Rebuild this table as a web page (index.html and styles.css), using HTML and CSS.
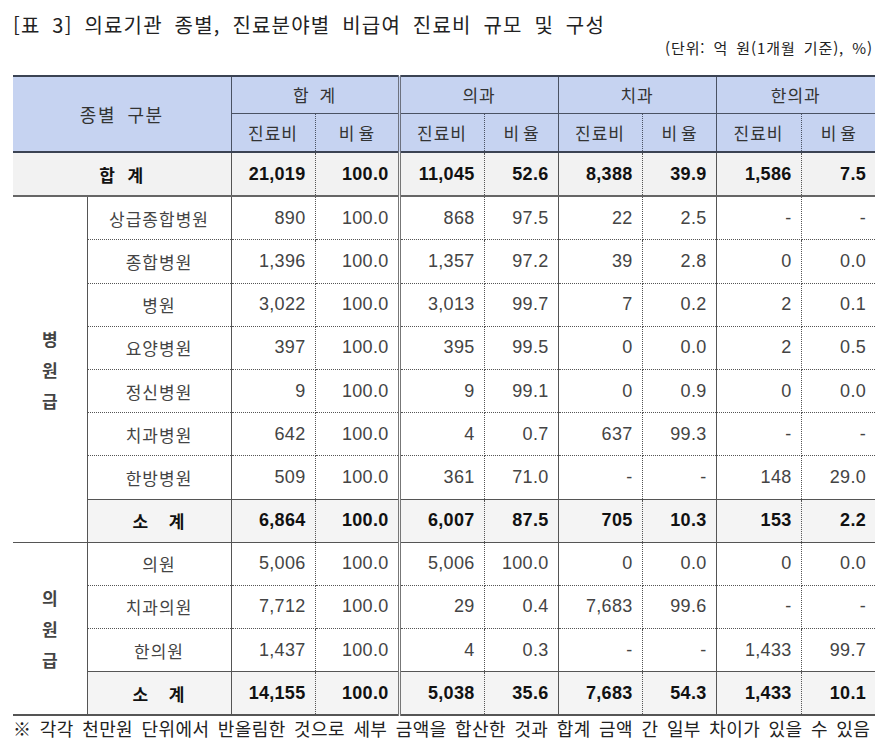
FILE: index.html
```html
<!DOCTYPE html>
<html lang="ko">
<head>
<meta charset="utf-8">
<title>표 3</title>
<link rel="stylesheet" href="styles.css">
</head>
<body>
<div class="page">
  <h1 class="title">[표 3] 의료기관 종별, 진료분야별 비급여 진료비 규모 및 구성</h1>
  <div class="unit">(단위: 억 원(1개월 기준), %)</div>
  <table class="tbl">
    <colgroup>
      <col class="w-grp"><col class="w-sub">
      <col class="w84"><col class="w84">
      <col class="w85"><col class="w74">
      <col class="w84"><col class="w74">
      <col class="w85"><col class="w74">
    </colgroup>
    <thead>
      <tr class="h1">
        <th colspan="2" rowspan="2" class="hlabel">종별 구분</th>
        <th colspan="2" class="g">합 계</th>
        <th colspan="2" class="g dbl">의과</th>
        <th colspan="2" class="g">치과</th>
        <th colspan="2" class="g">한의과</th>
      </tr>
      <tr class="h2">
        <th class="a">진료비</th><th class="b">비율</th>
        <th class="a dbl">진료비</th><th class="b">비율</th>
        <th class="a">진료비</th><th class="b">비율</th>
        <th class="a">진료비</th><th class="b">비율</th>
      </tr>
    </thead>
    <tbody>
      <tr class="total">
        <td colspan="2" class="lbl">합 계</td>
        <td class="a">21,019</td><td class="b">100.0</td>
        <td class="a dbl">11,045</td><td class="b">52.6</td>
        <td class="a">8,388</td><td class="b">39.9</td>
        <td class="a">1,586</td><td class="b">7.5</td>
      </tr>
      <tr class="dot">
        <td rowspan="8" class="grp">병<br>원<br>급</td>
        <td class="sub">상급종합병원</td>
        <td class="a">890</td><td class="b">100.0</td>
        <td class="a dbl">868</td><td class="b">97.5</td>
        <td class="a">22</td><td class="b">2.5</td>
        <td class="a">-</td><td class="b">-</td>
      </tr>
      <tr class="dot">
        <td class="sub">종합병원</td>
        <td class="a">1,396</td><td class="b">100.0</td>
        <td class="a dbl">1,357</td><td class="b">97.2</td>
        <td class="a">39</td><td class="b">2.8</td>
        <td class="a">0</td><td class="b">0.0</td>
      </tr>
      <tr class="dot">
        <td class="sub">병원</td>
        <td class="a">3,022</td><td class="b">100.0</td>
        <td class="a dbl">3,013</td><td class="b">99.7</td>
        <td class="a">7</td><td class="b">0.2</td>
        <td class="a">2</td><td class="b">0.1</td>
      </tr>
      <tr class="dot">
        <td class="sub">요양병원</td>
        <td class="a">397</td><td class="b">100.0</td>
        <td class="a dbl">395</td><td class="b">99.5</td>
        <td class="a">0</td><td class="b">0.0</td>
        <td class="a">2</td><td class="b">0.5</td>
      </tr>
      <tr class="dot">
        <td class="sub">정신병원</td>
        <td class="a">9</td><td class="b">100.0</td>
        <td class="a dbl">9</td><td class="b">99.1</td>
        <td class="a">0</td><td class="b">0.9</td>
        <td class="a">0</td><td class="b">0.0</td>
      </tr>
      <tr class="dot">
        <td class="sub">치과병원</td>
        <td class="a">642</td><td class="b">100.0</td>
        <td class="a dbl">4</td><td class="b">0.7</td>
        <td class="a">637</td><td class="b">99.3</td>
        <td class="a">-</td><td class="b">-</td>
      </tr>
      <tr class="dot">
        <td class="sub">한방병원</td>
        <td class="a">509</td><td class="b">100.0</td>
        <td class="a dbl">361</td><td class="b">71.0</td>
        <td class="a">-</td><td class="b">-</td>
        <td class="a">148</td><td class="b">29.0</td>
      </tr>
      <tr class="subtotal">
        <td class="sub st">소 계</td>
        <td class="a">6,864</td><td class="b">100.0</td>
        <td class="a dbl">6,007</td><td class="b">87.5</td>
        <td class="a">705</td><td class="b">10.3</td>
        <td class="a">153</td><td class="b">2.2</td>
      </tr>
      <tr class="dot">
        <td rowspan="4" class="grp">의<br>원<br>급</td>
        <td class="sub">의원</td>
        <td class="a">5,006</td><td class="b">100.0</td>
        <td class="a dbl">5,006</td><td class="b">100.0</td>
        <td class="a">0</td><td class="b">0.0</td>
        <td class="a">0</td><td class="b">0.0</td>
      </tr>
      <tr class="dot">
        <td class="sub">치과의원</td>
        <td class="a">7,712</td><td class="b">100.0</td>
        <td class="a dbl">29</td><td class="b">0.4</td>
        <td class="a">7,683</td><td class="b">99.6</td>
        <td class="a">-</td><td class="b">-</td>
      </tr>
      <tr class="dot">
        <td class="sub">한의원</td>
        <td class="a">1,437</td><td class="b">100.0</td>
        <td class="a dbl">4</td><td class="b">0.3</td>
        <td class="a">-</td><td class="b">-</td>
        <td class="a">1,433</td><td class="b">99.7</td>
      </tr>
      <tr class="subtotal last">
        <td class="sub st">소 계</td>
        <td class="a">14,155</td><td class="b">100.0</td>
        <td class="a dbl">5,038</td><td class="b">35.6</td>
        <td class="a">7,683</td><td class="b">54.3</td>
        <td class="a">1,433</td><td class="b">10.1</td>
      </tr>
    </tbody>
  </table>
  <p class="note">※ 각각 천만원 단위에서 반올림한 것으로 세부 금액을 합산한 것과 합계 금액 간 일부 차이가 있을 수 있음</p>
</div>
</body>
</html>
```
FILE: styles.css
```css
html, body {
  margin: 0;
  padding: 0;
  background: #ffffff;
}
body {
  font-family: "Noto Sans CJK KR", "Liberation Sans", sans-serif;
  color: #222;
}
.page {
  width: 862px;
  padding: 13px 0 0 13px;
}
.title {
  margin: 0;
  font-size: 20px;
  font-weight: 400;
  line-height: 24px;
  letter-spacing: 1.2px;
  word-spacing: 5px;
  color: #222;
  white-space: nowrap;
}
.unit {
  margin-top: 2px;
  text-align: right;
  padding-right: 2px;
  font-size: 15px;
  line-height: 18px;
  letter-spacing: 0.9px;
  word-spacing: 3px;
  color: #222;
}
.tbl {
  margin-top: 18px;
  width: 862px;
  table-layout: fixed;
  border-collapse: collapse;
  border-top: 2px solid #3b4353;
  border-bottom: 2px solid #555;
}
.w-grp { width: 74px; }
.w-sub { width: 144px; }
.w84 { width: 84px; }
.w85 { width: 85px; }
.w74 { width: 74px; }

.tbl th {
  background: #c6d3f1;
  font-weight: 400;
  font-size: 17px;
  letter-spacing: 1px;
  color: #333;
  padding: 0;
  text-align: center;
}
.tbl th.b { letter-spacing: 4px; text-indent: 4px; }
.tbl .h1 .g:first-child { word-spacing: 4px; }
.h1 { height: 37px; }
.h2 { height: 39px; }
.h1 .g { border-bottom: 1px solid #4a5263; border-left: 1px solid #4a5263; word-spacing: 4px; }
.h2 th { border-bottom: 2px solid #3b4353; }
.hlabel {
  border-bottom: 2px solid #3b4353;
  border-right: 1px solid #4a5263;
  font-size: 18px !important;
  letter-spacing: 1.5px !important;
  word-spacing: 5px;
}

.tbl td {
  padding: 0 9px 0 0;
  height: 42.2px;
  font-size: 18px;
  color: #444;
  vertical-align: middle;
}
.tbl td.a, .tbl td.b {
  text-align: right;
  font-family: "Liberation Sans", "Noto Sans CJK KR", sans-serif;
  letter-spacing: 0.3px;
}
.tbl .a { border-left: 1px solid #555; border-right: 1px dotted #555; }
.tbl .b { border-right: 1px dotted #555; }
.tbl td.b:last-child, .tbl th.b:last-child { border-right: none; }
.tbl .dbl { border-left: 3px double #777; }
.h2 .a { border-left: 1px solid #4a5263; border-right: 1px dotted #4a5263; }
.h2 .a.dbl, .h1 .g.dbl { border-left: 3px double #6d7280; }

.lbl, .sub {
  text-align: center;
  padding: 0 !important;
  font-size: 17px !important;
  letter-spacing: 1px;
  color: #333;
}
.total td {
  background: #f2f2f2;
  font-weight: 700;
  color: #111;
  border-bottom: 2px solid #666;
}
.total .lbl { letter-spacing: 1px; word-spacing: 6px; }
.dot td { border-bottom: 1px dotted #555; }
.sub { border-left: 1px solid #555; }
.sub.st { word-spacing: 14px; }
.grp {
  text-align: center;
  padding: 0 !important;
  font-weight: 700;
  font-size: 17px !important;
  line-height: 31px;
  color: #111;
  background: #fff;
  border-right: 1px solid #555;
  border-bottom: 1px solid #555 !important;
}
.subtotal td {
  background: #f4f4f4;
  font-weight: 700;
  color: #111;
  border-top: 1px solid #555;
  border-bottom: 1px solid #555;
}
.subtotal.last td { border-bottom: 2px solid #555; }
.note {
  margin: 1px 0 0 0;
  font-size: 18px;
  line-height: 22px;
  color: #222;
  white-space: nowrap;
  letter-spacing: 0.4px;
  word-spacing: 3px;
}
```
